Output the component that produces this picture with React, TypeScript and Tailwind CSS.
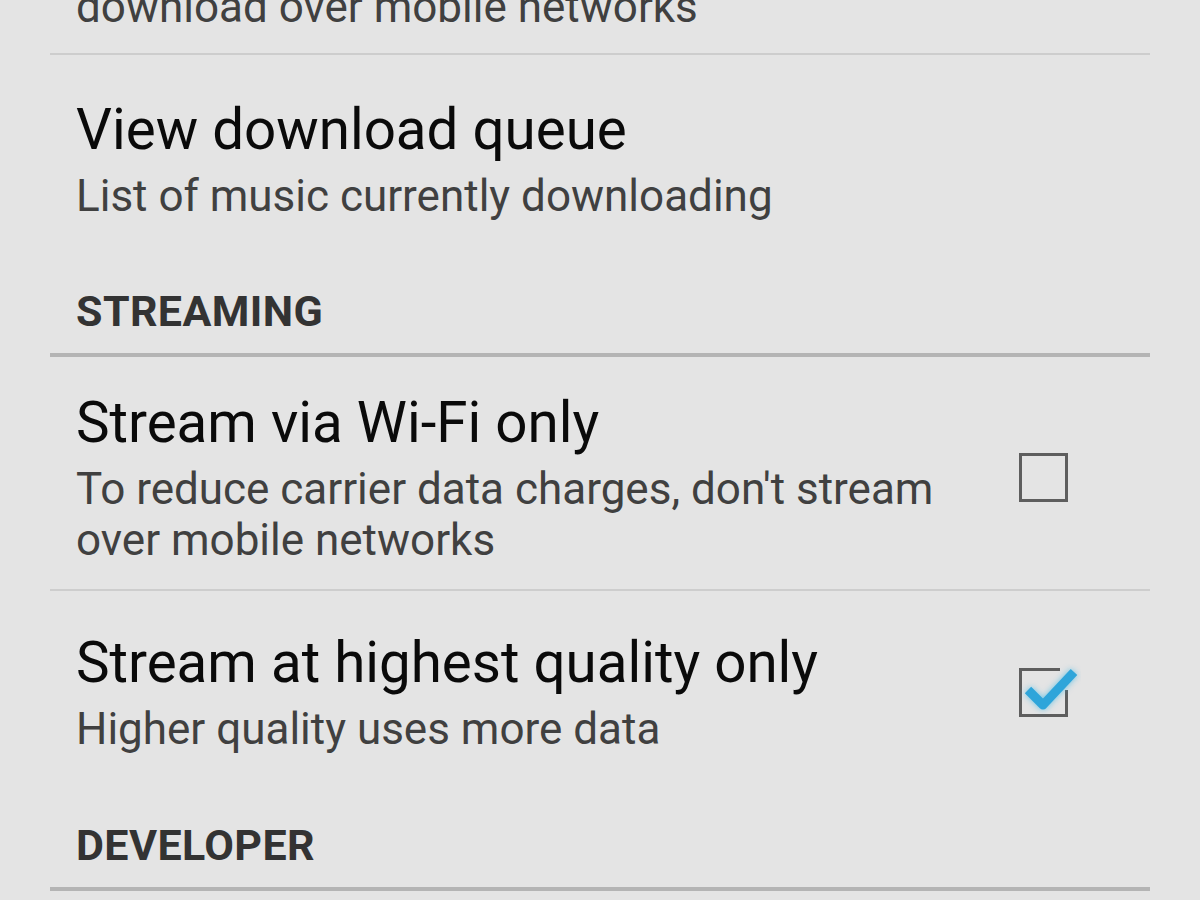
import React from 'react';

type Pref = {
  title: string;
  summary: string;
  checked?: boolean;
  pad: string;
};

const Checkbox: React.FC<{ checked: boolean }> = ({ checked }) => (
  <svg width="64" height="60" viewBox="0 0 64 60" className="shrink-0">
    {checked ? (
      <>
        <path d="M43 6.5H3.5v46h46V27" fill="none" stroke="#5e5e5e" strokeWidth="3" />
        <path
          d="M11 27l15 15L57 9"
          fill="none"
          stroke="#2ea5da"
          strokeWidth="9"
          strokeLinejoin="round"
          className="drop-shadow-[0_0_3px_rgba(51,181,229,0.7)]"
        />
      </>
    ) : (
      <rect x="3.5" y="6.5" width="46" height="46" fill="none" stroke="#5e5e5e" strokeWidth="3" />
    )}
  </svg>
);

const PrefRow: React.FC<Pref> = ({ title, summary, checked, pad }) => (
  <div className={`flex items-center pl-[26px] pr-[69px] ${pad}`}>
    <div className="flex-1 min-w-0 pr-[30px]">
      <p className="text-[56.5px] leading-[66px] text-[#0a0a0a]">{title}</p>
      <p className="mt-2 text-[44px] leading-[51px] text-[#404040]">{summary}</p>
    </div>
    {checked !== undefined && <Checkbox checked={checked} />}
  </div>
);

const Category: React.FC<{ label: string; pad: string }> = ({ label, pad }) => (
  <div className={`pl-[26px] pb-4 border-b-4 border-[#b4b4b4] ${pad}`}>
    <p className="text-[43px] leading-[51px] font-bold tracking-[0.4px] text-[#333333]">{label}</p>
  </div>
);

export default function App() {
  return (
    <div className="w-[1200px] h-[900px] overflow-hidden bg-[#e4e4e4] font-['Roboto',sans-serif]">
      <div className="mx-[50px] -mt-[18px]">
        {/* tail of the previous preference */}
        <p className="pl-[26px] pb-5 text-[44px] leading-[51px] text-[#404040] border-b-2 border-[#cdcdcd]">
          download over mobile networks
        </p>

        <PrefRow
          title="View download queue"
          summary="List of music currently downloading"
          pad="pt-[42px] pb-8"
        />

        <Category label="STREAMING" pad="pt-8" />

        <div className="border-b-2 border-[#cdcdcd]">
          <PrefRow
            title="Stream via Wi-Fi only"
            summary="To reduce carrier data charges, don't stream over mobile networks"
            checked={false}
            pad="pt-[33px] pb-[23px]"
          />
        </div>

        <PrefRow
          title="Stream at highest quality only"
          summary="Higher quality uses more data"
          checked={true}
          pad="pt-[39px] pb-8"
        />

        <Category label="DEVELOPER" pad="pt-[33px]" />
      </div>
    </div>
  );
}
